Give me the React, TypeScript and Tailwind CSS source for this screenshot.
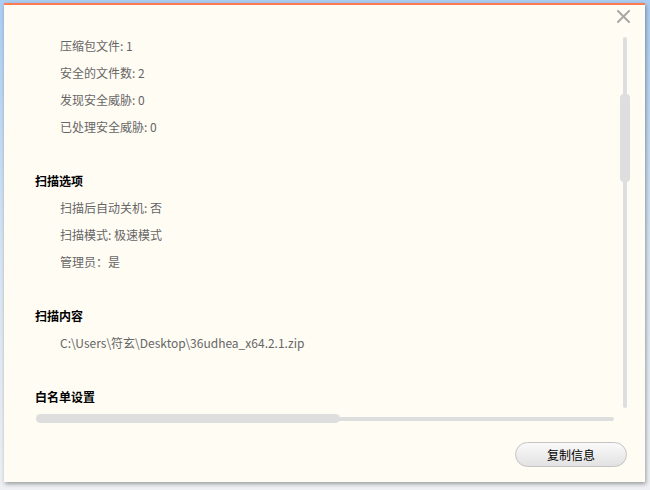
import React from "react"

const font = { fontFamily: '"Noto Sans CJK SC", "Noto Sans", sans-serif' }

type Row = { kind: "item" | "head" | "blank"; text?: string }

const rows: Row[] = [
  { kind: "item", text: "压缩包文件: 1" },
  { kind: "item", text: "安全的文件数: 2" },
  { kind: "item", text: "发现安全威胁: 0" },
  { kind: "item", text: "已处理安全威胁: 0" },
  { kind: "blank" },
  { kind: "head", text: "扫描选项" },
  { kind: "item", text: "扫描后自动关机: 否" },
  { kind: "item", text: "扫描模式: 极速模式" },
  { kind: "item", text: "管理员：是" },
  { kind: "blank" },
  { kind: "head", text: "扫描内容" },
  { kind: "item", text: "C:\\Users\\符玄\\Desktop\\36udhea_x64.2.1.zip" },
  { kind: "blank" },
  { kind: "head", text: "白名单设置" },
]

function CloseIcon() {
  return (
    <svg width="13" height="13" viewBox="0 0 13 13" fill="none">
      <path d="M1 1L12 12M12 1L1 12" stroke="#a8a8a8" strokeWidth="2" strokeLinecap="square" />
    </svg>
  )
}

export default function App() {
  return (
    <div
      className="w-[650px] h-[490px] bg-gradient-to-b from-[#aacdf2] via-[#d6e4f2] to-[#eef0f3] pt-[3px] pl-[4px]"
      style={font}
    >
      <div className="w-[641px] h-[479px] bg-[#fffcf4] border-t-2 border-[#ff7b52] flex flex-col shadow-[1px_2px_4px_rgba(0,0,0,0.35)]">
        {/* header */}
        <div className="h-[27px] flex justify-end items-start pt-[5px] pr-[15px]">
          <button className="w-[13px] h-[13px] flex items-center justify-center">
            <CloseIcon />
          </button>
        </div>

        {/* body */}
        <div className="h-[378px] flex">
          <div className="flex-1 overflow-hidden pl-[31px] text-[12px]">
            {rows.map((r, i) =>
              r.kind === "blank" ? (
                <div key={i} className="h-[27px]" />
              ) : r.kind === "head" ? (
                <div key={i} className="h-[27px] leading-[27px] font-bold text-black">
                  {r.text}
                </div>
              ) : (
                <div key={i} className="h-[27px] leading-[27px] pl-[25px] text-[#666666] whitespace-nowrap">
                  {r.text}
                </div>
              )
            )}
          </div>
          <div className="w-[10px] mr-[15px] ml-[6px] relative">
            <div className="absolute left-[3px] w-[4px] top-[5px] bottom-[2px] rounded-full bg-[#dedede]" />
            <div className="absolute left-0 w-[10px] top-[62px] h-[88px] rounded-[4px] bg-[#dedede]" />
          </div>
        </div>

        {/* horizontal scrollbar */}
        <div className="mt-[4px] h-[9px] ml-[32px] w-[578px] relative">
          <div className="absolute left-0 right-0 top-[3px] h-[4px] rounded-full bg-[#dedede]" />
          <div className="absolute left-0 top-0 h-[9px] w-[304px] rounded-full bg-[#dedede]" />
        </div>

        {/* footer */}
        <div className="mt-[19px] flex justify-end pr-[18px]">
          <button className="w-[112px] h-[25px] rounded-full border border-[#c4c4c4] bg-gradient-to-b from-[#fafafa] to-[#e2e2e2] text-[12px] text-black leading-none">
            复制信息
          </button>
        </div>
      </div>
    </div>
  )
}
